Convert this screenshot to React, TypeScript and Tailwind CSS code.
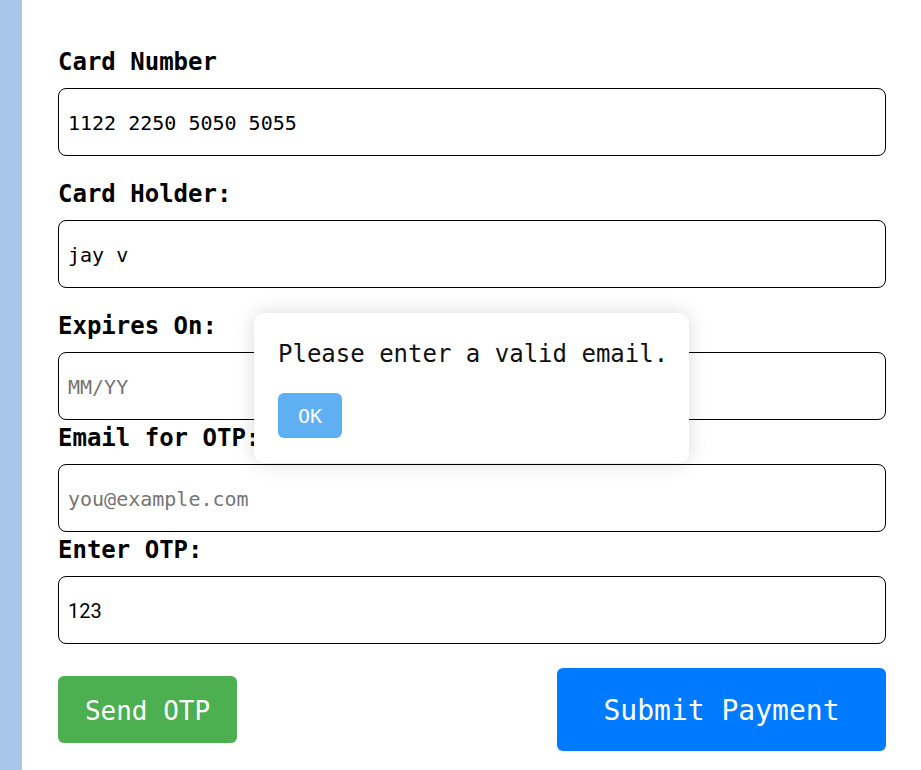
import React from "react";

const mono = "font-['DejaVu_Sans_Mono','Liberation_Mono',monospace]";

function Label({ children, className = "" }: { children: React.ReactNode; className?: string }) {
  return (
    <label className={`block text-[24px] leading-[28px] font-bold text-black pt-[1px] mb-[12px] ${mono} ${className}`}>
      {children}
    </label>
  );
}

function Field({
  value,
  placeholder,
  roboto,
}: {
  value?: string;
  placeholder?: string;
  roboto?: boolean;
}) {
  return (
    <input
      readOnly
      defaultValue={value}
      placeholder={placeholder}
      className={`block w-full h-[68px] border border-black rounded-[8px] pl-[9px] pt-[2px] text-[20px] text-black bg-white outline-none placeholder:text-[#757575] ${
        roboto ? "font-['Roboto',sans-serif]" : mono
      }`}
    />
  );
}

export default function App() {
  return (
    <div className="relative flex w-[921px] h-[770px] bg-white overflow-hidden">
      <div className="w-[22px] h-full bg-[#a8c6ea] shrink-0" />
      <div className="flex-1 pl-[36px] pr-[35px] pt-[47px]">
        <Label>Card Number</Label>
        <Field value="1122 2250 5050 5055" />
        <Label className="mt-[23px]">Card Holder:</Label>
        <Field value="jay v" />
        <Label className="mt-[23px]">Expires On:</Label>
        <Field placeholder="MM/YY" />
        <Label className="mt-[3px]">Email for OTP:</Label>
        <Field placeholder="you@example.com" />
        <Label className="mt-[3px]">Enter OTP:</Label>
        <Field value="123" roboto />
        <div className="flex items-center justify-between mt-[24px]">
          <button
            className={`w-[179px] h-[67px] rounded-[6px] bg-[#4caf50] text-white text-[26px] pt-[4px] flex items-center justify-center ${mono}`}
          >
            Send OTP
          </button>
          <button
            className={`w-[329px] h-[83px] rounded-[6px] bg-[#007bff] text-white text-[28px] pt-[3px] flex items-center justify-center ${mono}`}
          >
            Submit Payment
          </button>
        </div>
      </div>

      <div className="absolute left-[254px] top-[313px] w-[435px] h-[150px] bg-white rounded-[10px] shadow-[0_0_20px_rgba(0,0,0,0.15)] pl-[24px] pt-[27px]">
        <p className={`text-[24px] leading-[28px] text-[#111] ${mono}`}>Please enter a valid email.</p>
        <button
          className={`mt-[25px] w-[64px] h-[45px] rounded-[6px] bg-[#5fb0f2] text-white text-[20px] pt-[1px] flex items-center justify-center ${mono}`}
        >
          OK
        </button>
      </div>
    </div>
  );
}
